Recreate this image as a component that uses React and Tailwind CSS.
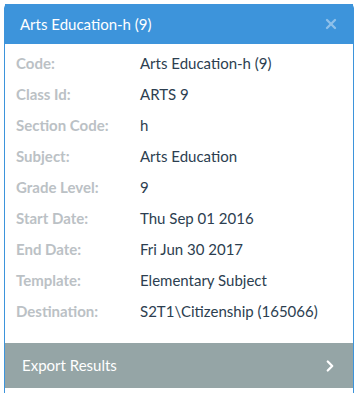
import { ChevronRight, X } from 'lucide-react';

const rows = [
  ['Code:', 'Arts Education-h (9)'],
  ['Class Id:', 'ARTS 9'],
  ['Section Code:', 'h'],
  ['Subject:', 'Arts Education'],
  ['Grade Level:', '9'],
  ['Start Date:', 'Thu Sep 01 2016'],
  ['End Date:', 'Fri Jun 30 2017'],
  ['Template:', 'Elementary Subject'],
  ['Destination:', 'S2T1\\Citizenship (165066)'],
];

export default function App() {
  return (
    <div className="w-[358px] h-[393px] bg-white overflow-hidden pt-[4px] pl-[4px]" style={{ fontFamily: 'Lato, "Noto Sans", sans-serif' }}>
      <div className="w-[350px] h-[400px] border border-[#3d94db] rounded-t-[4px] flex flex-col">
        {/* Header */}
        <div className="h-[40px] bg-[#3d94db] flex items-center justify-between pl-[15px] pr-[14px] -mt-px">
          <span className="text-white text-[15px]">Arts Education-h (9)</span>
          <X className="w-[16px] h-[16px] text-[#8ec0ea]" strokeWidth={3.5} />
        </div>

        {/* Details */}
        <div className="pt-[4px] pb-[16px] pl-[11px]">
          {rows.map(([label, value]) => (
            <div key={label} className="flex items-center h-[31px] text-[15px]">
              <span className="w-[124px] font-bold text-[#bbc1c5]">{label}</span>
              <span className="text-[#2c3e50]">{value}</span>
            </div>
          ))}
        </div>

        {/* Export bar */}
        <div className="h-[45px] bg-[#95a5a6] flex items-center justify-between pl-[17px] pr-[14px]">
          <span className="text-white text-[15px]">Export Results</span>
          <ChevronRight className="w-[18px] h-[18px] text-white" strokeWidth={3} />
        </div>
      </div>
    </div>
  );
}
